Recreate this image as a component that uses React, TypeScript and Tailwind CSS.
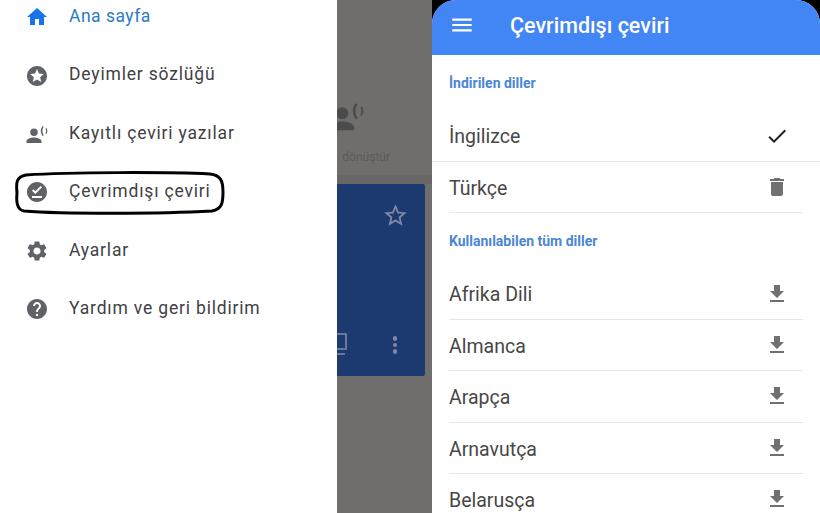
const ICONS = {
  home: 'M10 20v-6h4v6h5v-8h3L12 3 2 12h3v8z',
  stars:
    'M11.99 2C6.47 2 2 6.48 2 12s4.47 10 9.99 10C17.52 22 22 17.52 22 12S17.52 2 11.99 2zm4.24 16L12 15.45 7.77 18l1.12-4.81-3.73-3.23 4.92-.42L12 5l1.92 4.53 4.92.42-3.73 3.23L16.23 18z',
  voice:
    'M9 6.5a3.8 3.8 0 1 0 0 7.6 3.8 3.8 0 0 0 0-7.6zM9 15.5c-2.7 0-7.5 1.2-7.5 3.5v2h15v-2c0-2.3-4.8-3.5-7.5-3.5zM17.5 4c-2.4 3-2.4 7 0 10l1.2-.8c-1.8-2.6-1.8-5.8 0-8.4zM21.5 6l-1 .5c.8 1.5.8 3.2 0 5l1 .5c1.1-2 1.1-4 0-6z',
  offline:
    'M12 2C6.5 2 2 6.5 2 12s4.5 10 10 10 10-4.5 10-10S17.5 2 12 2zm5 16H7v-2h10v2zm-6.7-4L7 10.7l1.4-1.4 1.9 1.9 5.3-5.3L17 7.3 10.3 14z',
  settings:
    'M19.14 12.94c.04-.3.06-.61.06-.94 0-.32-.02-.64-.07-.94l2.03-1.58c.18-.14.23-.41.12-.61l-1.92-3.32c-.12-.22-.37-.29-.59-.22l-2.39.96c-.5-.38-1.03-.7-1.62-.94l-.36-2.54c-.04-.24-.24-.41-.48-.41h-3.84c-.24 0-.43.17-.47.41l-.36 2.54c-.59.24-1.13.57-1.62.94l-2.39-.96c-.22-.08-.47 0-.59.22L2.74 8.87c-.12.21-.08.47.12.61l2.03 1.58c-.05.3-.09.63-.09.94s.02.64.07.94l-2.03 1.58c-.18.14-.23.41-.12.61l1.92 3.32c.12.22.37.29.59.22l2.39-.96c.5.38 1.03.7 1.62.94l.36 2.54c.05.24.24.41.48.41h3.84c.24 0 .44-.17.47-.41l.36-2.54c.59-.24 1.13-.56 1.62-.94l2.39.96c.22.08.47 0 .59-.22l1.92-3.32c.12-.22.07-.47-.12-.61l-2.01-1.58zM12 15.6c-1.98 0-3.6-1.62-3.6-3.6s1.62-3.6 3.6-3.6 3.6 1.62 3.6 3.6-1.62 3.6-3.6 3.6z',
  help: 'M12 2C6.48 2 2 6.48 2 12s4.48 10 10 10 10-4.48 10-10S17.52 2 12 2zm1 17h-2v-2h2v2zm2.07-7.75l-.9.92C13.45 12.9 13 13.5 13 15h-2v-.5c0-1.1.45-2.1 1.17-2.83l1.24-1.26c.37-.36.59-.86.59-1.41 0-1.1-.9-2-2-2s-2 .9-2 2H8c0-2.21 1.79-4 4-4s4 1.79 4 4c0 .88-.36 1.68-.93 2.25z',
  download: 'M19 9h-4V3H9v6H5l7 7 7-7zM5 18v2h14v-2H5z',
  trash: 'M6 19c0 1.1.9 2 2 2h8c1.1 0 2-.9 2-2V7H6v12zM19 4h-3.5l-1-1h-5l-1 1H5v2h14V4z',
  menu: 'M3 18h18v-2H3v2zm0-5h18v-2H3v2zm0-7v2h18V6H3z',
  check: 'M9 16.17L4.83 12l-1.41 1.41L9 19 21 7l-1.41-1.41z',
  star: 'M22 9.24l-7.19-.62L12 2 9.19 8.63 2 9.24l5.46 4.73L5.82 21 12 17.27 18.18 21l-1.63-7.03L22 9.24zM12 15.4l-3.76 2.27 1-4.28-3.32-2.88 4.38-.38L12 6.1l1.71 4.04 4.38.38-3.32 2.88 1 4.28L12 15.4z',
};

function Icon({ d, className }: { d: string; className: string }) {
  return (
    <svg viewBox="0 0 24 24" fill="currentColor" className={className}>
      <path d={d} />
    </svg>
  );
}

const drawerItems = [
  { label: 'Ana sayfa', icon: ICONS.home, active: true },
  { label: 'Deyimler sözlüğü', icon: ICONS.stars },
  { label: 'Kayıtlı çeviri yazılar', icon: ICONS.voice },
  { label: 'Çevrimdışı çeviri', icon: ICONS.offline, circled: true },
  { label: 'Ayarlar', icon: ICONS.settings },
  { label: 'Yardım ve geri bildirim', icon: ICONS.help },
];

const available = ['Afrika Dili', 'Almanca', 'Arapça', 'Arnavutça', 'Belarusça'];

function Drawer() {
  return (
    <div className="w-[337px] shrink-0 bg-white -mt-[12px] font-['Roboto',sans-serif]">
      {drawerItems.map((item) => (
        <div key={item.label} className="relative flex h-[58.4px] items-center pl-[25px]">
          <Icon
            d={item.icon}
            className={`h-6 w-6 ${item.active ? 'text-[#1a73e8]' : 'text-[#5f6368]'}`}
          />
          <span
            className={`-mt-[2px] ml-5 text-[17.5px] ${
              item.active ? 'tracking-[0.5px] text-[#2a7ac4]' : 'tracking-[0.82px] text-[#3f4144]'
            }`}
          >
            {item.label}
          </span>
          {/* hand drawn marker round the row */}
          {item.circled && (
            <svg
              viewBox="0 165 240 55"
              fill="none"
              stroke="#000"
              strokeWidth="3"
              className="absolute left-0 top-[2px] h-[55px] w-[240px]"
            >
              <path d="M17 193C16 183 16 177 26 175C70 172 170 172 210 174C220 175 223 180 223 192C223 203 222 209 212 211C160 214 60 214 24 211C17 210 16 203 17 193Z" />
            </svg>
          )}
        </div>
      ))}
    </div>
  );
}

function DimmedHome() {
  return (
    <div className="flex h-full w-[95px] shrink-0 flex-col overflow-hidden bg-[#6f6e6d] font-['Roboto',sans-serif]">
      <div className="flex h-[175px] shrink-0 flex-col">
        <Icon d={ICONS.voice} className="-ml-[9px] mt-[97px] h-[38px] w-[38px] shrink-0 text-[#4b4b4b]" />
        <div className="mt-[13px] flex justify-end pr-[42px] text-[12px] whitespace-nowrap text-[#5c5c5c]">
          dönüştür
        </div>
      </div>
      <div className="h-[9px] shrink-0 bg-[#686766]" />
      <div className="mr-[7px] flex h-[192px] flex-col justify-between rounded-r-[2px] bg-[#1c3a70] pb-[19px] pt-[18px]">
        <div className="flex justify-end pr-[16px]">
          <Icon d={ICONS.star} className="h-[27px] w-[27px] text-[#7d8aa3]" />
        </div>
        <div className="flex items-center justify-between pr-[28px]">
          <svg viewBox="0 0 14 24" className="h-[24px] w-[14px] text-[#7d8aa3]" fill="none" stroke="currentColor" strokeWidth="1.6">
            <path d="M0 1h9v15H0M0 21h8" />
          </svg>
          <div className="flex flex-col gap-[2px]">
            <span className="h-[4.5px] w-[4.5px] rounded-full bg-[#7d8aa3]" />
            <span className="h-[4.5px] w-[4.5px] rounded-full bg-[#7d8aa3]" />
            <span className="h-[4.5px] w-[4.5px] rounded-full bg-[#7d8aa3]" />
          </div>
        </div>
      </div>
    </div>
  );
}

function SectionTitle({ children, className }: { children: string; className: string }) {
  return (
    <div className={`flex items-center px-[17px] text-[14px] font-bold text-[#4a86d6] ${className}`}>
      {children}
    </div>
  );
}

function LangRow({ name, icon }: { name: string; icon: string }) {
  return (
    <div className="mx-[17px] flex h-[51.4px] items-center justify-between border-b border-[#e6e6e6]">
      <span className="pt-[3px] text-[19.5px] text-[#474747]">{name}</span>
      <Icon d={icon} className="mr-[14px] h-[24px] w-[24px] text-[#707070]" />
    </div>
  );
}

function OfflinePanel() {
  return (
    <div className="flex-1 overflow-hidden bg-black">
      <div className="h-full overflow-hidden rounded-t-[24px] bg-white font-['Roboto',sans-serif]">
        <div className="flex h-[55px] items-center bg-[#4285f4] text-white">
          <Icon d={ICONS.menu} className="-mt-[5px] ml-[17px] h-[26px] w-[26px]" />
          <span className="-mt-[2px] ml-[35px] text-[21.5px] font-medium">Çevrimdışı çeviri</span>
        </div>
        <SectionTitle className="h-[56px]">İndirilen diller</SectionTitle>
        <div className="flex h-[51px] items-center justify-between border-b border-[#e6e6e6] pl-[17px] pr-[31px]">
          <span className="pt-[2px] text-[19.5px] text-[#474747]">İngilizce</span>
          <Icon d={ICONS.check} className="h-[24px] w-[24px] text-[#222]" />
        </div>
        <LangRow name="Türkçe" icon={ICONS.trash} />
        <SectionTitle className="h-[55px] pt-[2px]">Kullanılabilen tüm diller</SectionTitle>
        {available.map((name) => (
          <LangRow key={name} name={name} icon={ICONS.download} />
        ))}
      </div>
    </div>
  );
}

export default function App() {
  return (
    <div className="flex h-[513px] w-[820px] overflow-hidden bg-white">
      <Drawer />
      <DimmedHome />
      <OfflinePanel />
    </div>
  );
}
